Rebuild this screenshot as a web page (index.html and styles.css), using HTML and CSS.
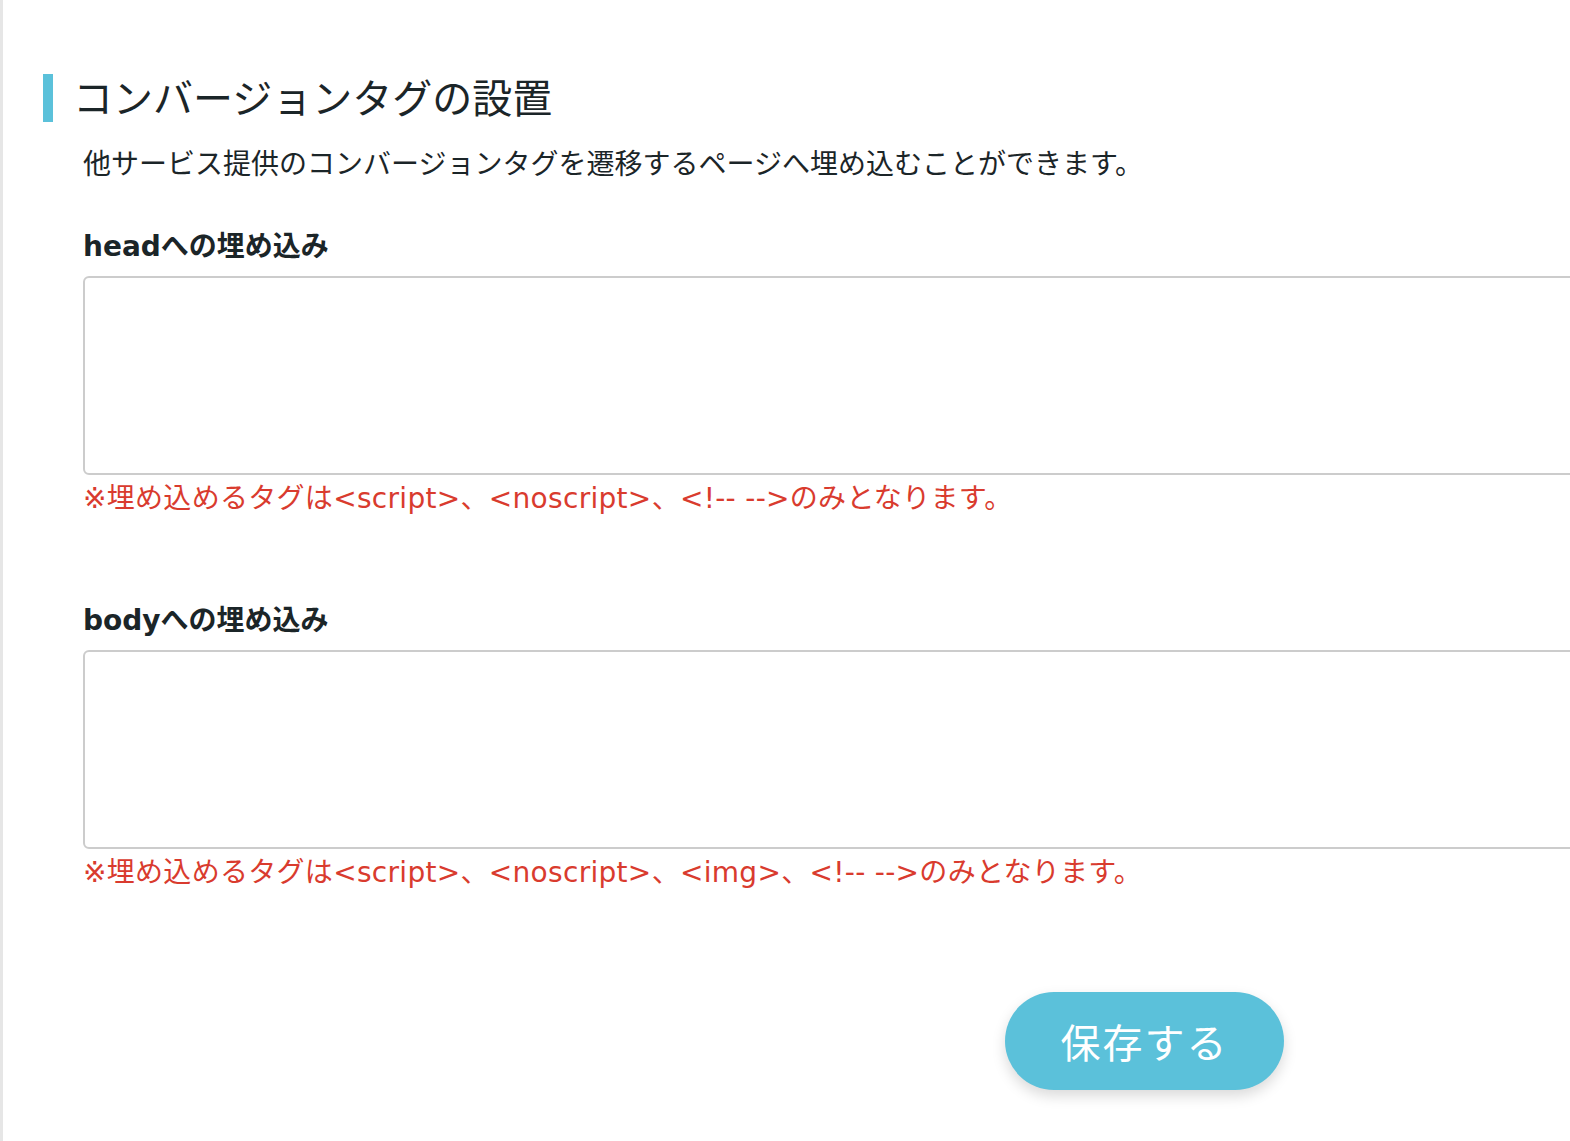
FILE: index.html
```html
<!DOCTYPE html>
<html lang="ja">
<head>
    <meta charset="UTF-8">
    <meta name="viewport" content="width=device-width, initial-scale=1.0">
    <title>コンバージョンタグの設置</title>
    <link rel="stylesheet" href="styles.css">
</head>
<body>
    <div class="page">
        <h1 class="section-title">コンバージョンタグの設置</h1>

        <form class="tag-form">
            <p class="description">他サービス提供のコンバージョンタグを遷移するページへ埋め込むことができます。</p>

            <div class="field">
                <label for="headTag">headへの埋め込み</label>
                <textarea id="headTag"></textarea>
                <p class="note">※埋め込めるタグは&lt;script&gt;、&lt;noscript&gt;、&lt;!-- --&gt;のみとなります。</p>
            </div>

            <div class="field">
                <label for="bodyTag">bodyへの埋め込み</label>
                <textarea id="bodyTag"></textarea>
                <p class="note">※埋め込めるタグは&lt;script&gt;、&lt;noscript&gt;、&lt;img&gt;、&lt;!-- --&gt;のみとなります。</p>
            </div>

            <div class="actions">
                <button type="button" class="save-btn">保存する</button>
            </div>
        </form>
    </div>
</body>
</html>
```

FILE: styles.css
```css
:root {
    --accent: #5bc1da;
    --text: #1b2528;
    --error: #d93b2e;
    --border: #cccccc;
    --latin: "DejaVu Sans", "Noto Sans CJK JP", sans-serif;
}

* {
    margin: 0;
    padding: 0;
    box-sizing: border-box;
}

body {
    font-family: "Noto Sans", "Noto Sans CJK JP", sans-serif;
    color: var(--text);
    background: #fff;
    overflow: hidden;
}

.page {
    min-height: 100vh;
    border-left: 3px solid #e6e6e6;
    padding: 74px 0 0 40px;
}

.section-title {
    border-left: 10px solid var(--accent);
    padding-left: 20px;
    height: 48px;
    font-size: 40px;
    line-height: 48px;
    font-weight: 400;
}

.tag-form {
    width: 2163px;
    padding-left: 40px;
}

.description {
    margin-top: 21px;
    font-size: 28px;
    line-height: 40px;
}

.field {
    margin-top: 44px;
}

.field + .field {
    margin-top: 82px;
}

.field label {
    display: block;
    font-family: var(--latin);
    font-size: 28px;
    line-height: 40px;
    font-weight: 700;
}

.field textarea {
    display: block;
    width: 100%;
    height: 199px;
    margin-top: 9px;
    border: 2px solid var(--border);
    border-radius: 6px;
    resize: none;
    font: inherit;
}

.note {
    margin-top: 4px;
    font-family: var(--latin);
    font-size: 28px;
    letter-spacing: 0.3px;
    line-height: 40px;
    color: var(--error);
}

.actions {
    display: flex;
    justify-content: center;
    margin-top: 99px;
}

.save-btn {
    width: 279px;
    height: 98px;
    border: none;
    border-radius: 49px;
    background: var(--accent);
    color: #fff;
    font-family: inherit;
    font-size: 40px;
    letter-spacing: 2px;
    box-shadow: 0 6px 14px rgba(0, 0, 0, 0.15);
    cursor: pointer;
}
```
